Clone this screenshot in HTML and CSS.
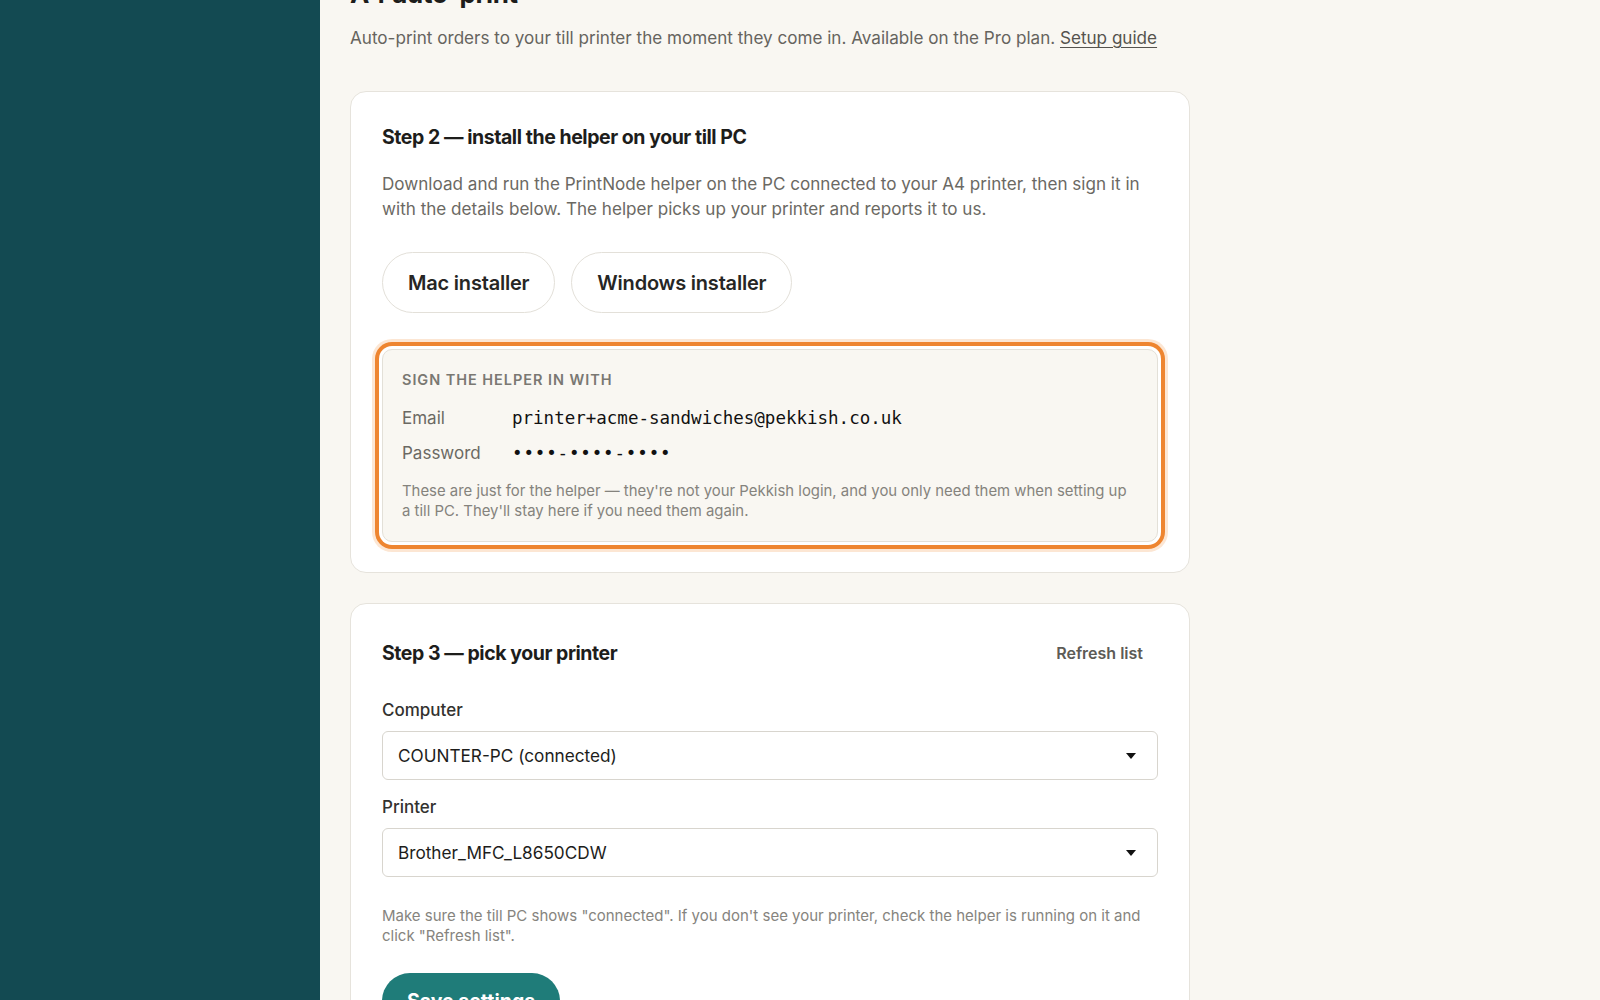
FILE: index.html
```html
<!DOCTYPE html>
<html lang="en">
<head>
<meta charset="utf-8">
<title>A4 auto-print</title>
<link rel="stylesheet" href="styles.css">
</head>
<body>
<div class="app">
  <aside class="sidebar"></aside>
  <main class="main">
    <div class="page">
      <h1 class="page-title">A4 auto-print</h1>
      <p class="page-sub">Auto-print orders to your till printer the moment they come in. Available on the Pro plan. <a href="#" class="link">Setup guide</a></p>

      <section class="card">
        <h2 class="card-title">Step 2 — install the helper on your till PC</h2>
        <p class="card-text">Download and run the PrintNode helper on the PC connected to your A4 printer, then sign it in with the details below. The helper picks up your printer and reports it to us.</p>
        <div class="btn-row">
          <button class="pill">Mac installer</button>
          <button class="pill">Windows installer</button>
        </div>
        <div class="signin">
          <div class="signin-title">SIGN THE HELPER IN WITH</div>
          <div class="creds">
            <div class="cred-row"><span class="cred-label">Email</span><span class="cred-value">printer+acme-sandwiches@pekkish.co.uk</span></div>
            <div class="cred-row"><span class="cred-label">Password</span><span class="cred-value pw">••••-••••-••••</span></div>
          </div>
          <p class="signin-note">These are just for the helper — they're not your Pekkish login, and you only need them when setting up a till PC. They'll stay here if you need them again.</p>
        </div>
      </section>

      <section class="card">
        <div class="card-head">
          <h2 class="card-title">Step 3 — pick your printer</h2>
          <button class="text-btn">Refresh list</button>
        </div>
        <label class="field-label">Computer</label>
        <div class="select"><span>COUNTER-PC (connected)</span><span class="caret"></span></div>
        <label class="field-label second">Printer</label>
        <div class="select"><span>Brother_MFC_L8650CDW</span><span class="caret"></span></div>
        <p class="help">Make sure the till PC shows "connected". If you don't see your printer, check the helper is running on it and click "Refresh list".</p>
        <button class="primary">Save settings</button>
      </section>
    </div>
  </main>
</div>
</body>
</html>
```

FILE: styles.css
```css
* { box-sizing: border-box; }
html, body { margin: 0; padding: 0; }
body {
  font-family: "Inter", "Noto Sans", sans-serif;
  background: #f9f7f2;
  color: #1d1d1b;
  height: 1000px;
  overflow: hidden;
}
.app { display: flex; height: 1000px; }
.sidebar { width: 320px; flex: none; background: #134a52; }
.main { flex: 1; padding-left: 30px; }
.page { margin-top: -22px; width: 840px; }
.page-title {
  margin: 0;
  font-size: 26px;
  line-height: 32px;
  font-weight: 700;
  letter-spacing: -0.3px;
}
.page-sub {
  margin: 15px 0 0;
  font-size: 17.1px;
  line-height: 26px;
  color: #66645e;
}
.link { color: #55534e; text-decoration: underline; text-underline-offset: 3px; }

.card {
  background: #fff;
  border: 1px solid #e6e3dc;
  border-radius: 16px;
  padding: 32px 31px 30px;
  margin-top: 40px;
}
.card + .card { margin-top: 30px; }
.card-title {
  margin: 0;
  font-size: 19.5px;
  line-height: 26px;
  font-weight: 700;
  letter-spacing: -0.45px;
}
.card-text {
  margin: 22px 0 0;
  font-size: 17.1px;
  line-height: 24.5px;
  color: #6b6963;
}
.btn-row { display: flex; gap: 16px; margin-top: 31px; }
.pill {
  height: 61px;
  padding: 0 25px;
  border: 1px solid #e3e0d9;
  border-radius: 31px;
  background: #fff;
  font-family: inherit;
  font-size: 20px;
  font-weight: 600;
  color: #262624;
  letter-spacing: -0.2px;
}
.signin {
  margin-top: 36px;
  background: #f9f7f2;
  border: 1px solid #e3e0d8;
  border-radius: 10px;
  padding: 20px 19px 20px;
  box-shadow: 0 0 0 3px #ffffff, 0 0 0 7px #ee8530, 0 0 0 10px rgba(240, 140, 55, 0.22);
}
.signin-title {
  font-size: 14.5px;
  line-height: 20px;
  font-weight: 600;
  letter-spacing: 0.95px;
  color: #7a7872;
}
.creds { margin-top: 10px; }
.cred-row { display: flex; align-items: center; height: 35px; }
.cred-label {
  width: 110px;
  flex: none;
  font-size: 17px;
  color: #6b6963;
}
.cred-value {
  font-family: "DejaVu Sans Mono", monospace;
  font-size: 17.5px;
  color: #111;
}
.cred-value.pw { letter-spacing: 0.85px; }
.signin-note {
  margin: 11px 0 0;
  font-size: 14.9px;
  line-height: 20px;
  color: #85837d;
}

.card-head { display: flex; justify-content: space-between; align-items: center; height: 34px; }
.text-btn {
  background: none;
  border: none;
  padding: 0 15px;
  height: 34px;
  font-family: inherit;
  font-size: 16px;
  font-weight: 600;
  color: #5d5b56;
}
.field-label {
  display: block;
  margin-top: 29px;
  font-size: 17px;
  line-height: 22px;
  font-weight: 500;
  color: #33322f;
}
.field-label.second { margin-top: 16px; }
.select {
  margin-top: 10px;
  height: 49px;
  border: 1px solid #d8d5ce;
  border-radius: 6px;
  background: #fff;
  display: flex;
  align-items: center;
  justify-content: space-between;
  padding: 0 21px 0 15px;
  font-size: 17.2px;
  color: #1d1d1b;
}
.caret {
  width: 0; height: 0;
  border-left: 5px solid transparent;
  border-right: 5px solid transparent;
  border-top: 6px solid #111;
}
.help {
  margin: 29px 0 0;
  font-size: 15px;
  line-height: 20px;
  color: #86847e;
}
.primary {
  margin-top: 27px;
  height: 56px;
  padding: 0 25px;
  border: none;
  border-radius: 28px;
  background: #1f7c79;
  color: #fff;
  font-family: inherit;
  font-size: 19.5px;
  font-weight: 700;
}
```
